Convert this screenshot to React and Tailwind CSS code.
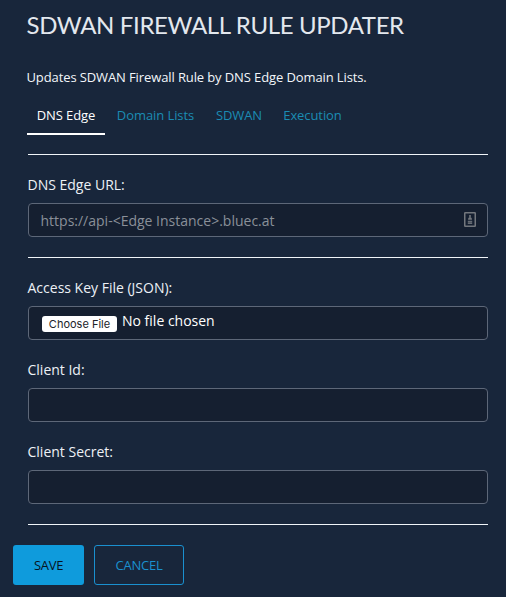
import { useState } from 'react';

const TABS = [
  { name: 'DNS Edge', width: 'w-[78px]' },
  { name: 'Domain Lists', width: 'w-[101px]' },
  { name: 'SDWAN', width: 'w-[66px]' },
  { name: 'Execution', width: 'w-[81px]' },
];

const fieldClass =
  'block h-[34px] w-full rounded-[4px] border border-[#5d6778] bg-[#151f30] pl-[11.5px] pr-3 text-sm text-white outline-none placeholder:text-[#8a9099] placeholder:opacity-100';

function Divider() {
  return <hr className="h-px border-0 bg-[#f0f4f8]" />;
}

function Label({ htmlFor, children }) {
  return (
    <label htmlFor={htmlFor} className="-ml-[0.5px] mb-2 block h-5 text-sm leading-5 text-[#edf1f6]">
      {children}
    </label>
  );
}

function KeeperIcon() {
  return (
    <svg width="12" height="15" viewBox="0 0 12 15" fill="none" aria-hidden="true">
      <rect x="0.75" y="0.75" width="10.5" height="13.5" rx="0.5" stroke="#73777d" strokeWidth="1.5" />
      <path d="M6 3v2" stroke="#73777d" strokeWidth="1.6" />
      <path d="M4 7.8c0-3.6 4-3.6 4 0z" fill="#73777d" />
      <path d="M3.8 9.5h4.4M3.8 11.2h4.4" stroke="#666b73" strokeWidth="1.4" />
    </svg>
  );
}

export default function App() {
  const [active, setActive] = useState('DNS Edge');
  return (
    <main className="h-[597px] w-[506px] overflow-hidden bg-[#18263b] font-['Open_Sans',sans-serif] text-white">
      <div className="pr-[18px] pl-7 pt-[9px]">
        <h1 className="-ml-[1.5px] h-8 whitespace-nowrap font-['Lato',sans-serif] text-2xl leading-8 font-normal tracking-[-0.37px] text-[#e3e8ee]">
          SDWAN FIREWALL RULE UPDATER
        </h1>
        <p className="-ml-[1.5px] mt-[26px] h-5 text-[13px] leading-5 tracking-[-0.11px] whitespace-nowrap text-[#f3f6fa]">
          Updates SDWAN Firewall Rule by DNS Edge Domain Lists.
        </p>
        <nav className="-ml-px mt-[13px] flex h-[35px] gap-0">
          {TABS.map(({ name, width }) => (
            <button
              key={name}
              onClick={() => setActive(name)}
              className={`${width} shrink-0 border-b-2 pb-[3px] text-[13px] leading-5 tracking-[-0.08px] whitespace-nowrap ${
                active === name ? 'border-white text-white' : 'border-transparent text-[#1b8cb3]'
              }`}
            >
              {name}
            </button>
          ))}
        </nav>
        <form className="mt-[19px]">
          <Divider />
          <div className="pt-5 pb-5">
            <Label htmlFor="url">DNS Edge URL:</Label>
            <div className="relative">
              <input id="url" className={fieldClass} placeholder="https://api-<Edge Instance>.bluec.at" />
              <span className="absolute top-[9px] right-3">
                <KeeperIcon />
              </span>
            </div>
          </div>
          <Divider />
          <div className="flex flex-col gap-5 pt-5 pb-5">
            <div>
              <Label>Access Key File (JSON):</Label>
              <div className="flex h-[34px] w-full rounded-[4px] border border-[#5d6778] bg-[#151f30] pl-[13px]">
                <button
                  type="button"
                  className="mt-[9px] h-4 w-[75px] rounded-[3px] bg-white font-[family-name:Inter] text-[11px] leading-4 text-[#202328]"
                >
                  Choose File
                </button>
                <span className="ml-[5px] mt-1 text-sm leading-5">No file chosen</span>
              </div>
            </div>
            <div>
              <Label htmlFor="client-id">Client Id:</Label>
              <input id="client-id" className={fieldClass} />
            </div>
            <div>
              <Label htmlFor="client-secret">Client Secret:</Label>
              <input id="client-secret" className={fieldClass} />
            </div>
          </div>
          <Divider />
        </form>
      </div>
      <div className="mt-5 ml-[13px] flex gap-2.5 text-[13px]">
        <button className="h-10 w-[71px] rounded-[3px] bg-[#0f9bdc] pt-0.5 tracking-[-0.3px] text-[#07131f]">SAVE</button>
        <button className="h-10 w-[90px] rounded-[3px] border border-[#1a90cf] pt-0.5 tracking-[-0.2px] text-[#1a90cf]">
          CANCEL
        </button>
      </div>
    </main>
  );
}
